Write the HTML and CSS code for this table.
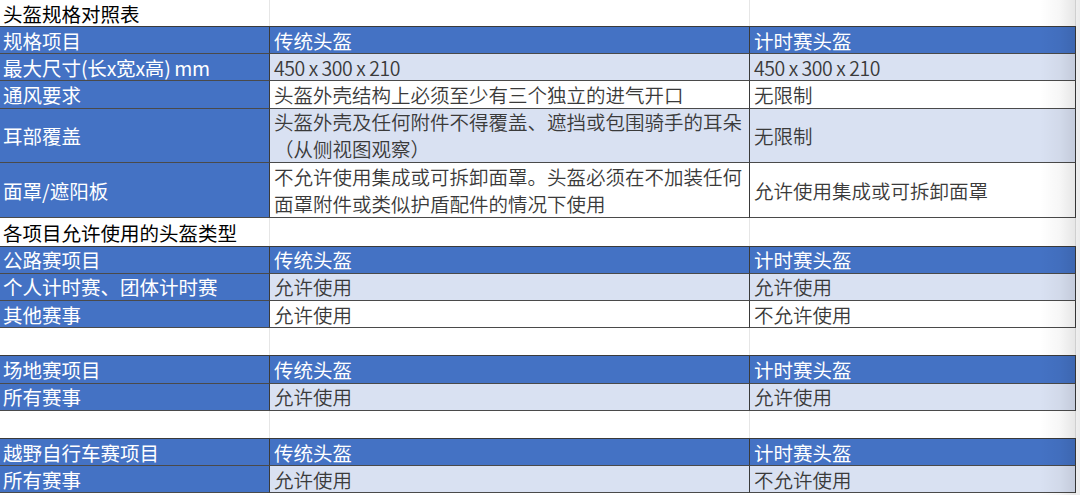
FILE: index.html
```html
<!DOCTYPE html>
<html lang="zh-CN">
<head>
<meta charset="utf-8">
<title>头盔规格对照表</title>
<link rel="stylesheet" href="styles.css">
</head>
<body>
<div class="sheet">
  <div class="row plain title-row">
    <div class="cell title">头盔规格对照表</div><div class="cell"></div><div class="cell"></div>
  </div>

  <div class="block">
    <div class="row">
      <div class="cell hd">规格项目</div><div class="cell hd">传统头盔</div><div class="cell hd">计时赛头盔</div>
    </div>
    <div class="row">
      <div class="cell hd">最大尺寸<span class="lat">(</span>长<span class="lat">x</span>宽<span class="lat">x</span>高<span class="lat">) mm</span></div><div class="cell lt"><span class="lat">450 x 300 x 210</span></div><div class="cell lt"><span class="lat">450 x 300 x 210</span></div>
    </div>
    <div class="row">
      <div class="cell hd">通风要求</div><div class="cell wt">头盔外壳结构上必须至少有三个独立的进气开口</div><div class="cell wt">无限制</div>
    </div>
    <div class="row tall">
      <div class="cell hd">耳部覆盖</div><div class="cell lt">头盔外壳及任何附件不得覆盖、遮挡或包围骑手的耳朵<br>（从侧视图观察）</div><div class="cell lt">无限制</div>
    </div>
    <div class="row taller">
      <div class="cell hd">面罩/遮阳板</div><div class="cell wt">不允许使用集成或可拆卸面罩。头盔必须在不加装任何<br>面罩附件或类似护盾配件的情况下使用</div><div class="cell wt">允许使用集成或可拆卸面罩</div>
    </div>
  </div>

  <div class="row plain">
    <div class="cell title">各项目允许使用的头盔类型</div><div class="cell"></div><div class="cell"></div>
  </div>

  <div class="block">
    <div class="row">
      <div class="cell hd">公路赛项目</div><div class="cell hd">传统头盔</div><div class="cell hd">计时赛头盔</div>
    </div>
    <div class="row">
      <div class="cell hd">个人计时赛、团体计时赛</div><div class="cell lt">允许使用</div><div class="cell lt">允许使用</div>
    </div>
    <div class="row">
      <div class="cell hd">其他赛事</div><div class="cell wt">允许使用</div><div class="cell wt">不允许使用</div>
    </div>
  </div>

  <div class="row plain blank">
    <div class="cell"></div><div class="cell"></div><div class="cell"></div>
  </div>

  <div class="block">
    <div class="row">
      <div class="cell hd">场地赛项目</div><div class="cell hd">传统头盔</div><div class="cell hd">计时赛头盔</div>
    </div>
    <div class="row">
      <div class="cell hd">所有赛事</div><div class="cell lt">允许使用</div><div class="cell lt">允许使用</div>
    </div>
  </div>

  <div class="row plain blank">
    <div class="cell"></div><div class="cell"></div><div class="cell"></div>
  </div>

  <div class="block">
    <div class="row">
      <div class="cell hd">越野自行车赛项目</div><div class="cell hd">传统头盔</div><div class="cell hd">计时赛头盔</div>
    </div>
    <div class="row">
      <div class="cell hd">所有赛事</div><div class="cell lt">允许使用</div><div class="cell lt">不允许使用</div>
    </div>
  </div>

  <div class="edge-shade"></div>
</div>
</body>
</html>
```

FILE: styles.css
```css
html, body {
  margin: 0;
  padding: 0;
  background: #ffffff;
}

body {
  font-family: "Noto Sans CJK SC", "Noto Sans", sans-serif;
  font-size: 19.5px;
  color: #3b3b3b;
  overflow: hidden;
}

.sheet {
  position: relative;
  width: 1080px;
  height: 495px;
}

.block {
  border-top: 1px solid #3a3a3a;
  width: 1076px;
}

.row {
  display: grid;
  grid-template-columns: 270px 480px 326px;
  height: 27.2px;
  box-sizing: border-box;
}

.title-row {
  height: 26px;
}

.row.tall {
  height: 54.4px;
}

.row.taller {
  height: 55.5px;
}

.cell {
  box-sizing: border-box;
  display: flex;
  align-items: center;
  padding: 0 3px 0 4px;
  line-height: 27px;
  white-space: nowrap;
  overflow: hidden;
}

.block .cell {
  border-right: 1px solid #3a3a3a;
  border-bottom: 1px solid #4a4a4a;
}

.block .cell:first-child {
  padding-left: 3px;
}

.plain .cell {
  border-right: 1px solid #e6e6e6;
}

.cell.title {
  color: #000000;
  font-weight: 400;
  padding-left: 3px;
}

.cell.hd {
  background: #4472c4;
  color: #ffffff;
}

.cell.lt {
  background: #d9e1f2;
  color: #3a3a3a;
  font-weight: 350;
}

.cell.wt {
  background: #ffffff;
  color: #3a3a3a;
  font-weight: 350;
}

.lat {
  letter-spacing: -0.45px;
  white-space: pre;
}

.edge-shade {
  position: absolute;
  top: 0;
  right: 0;
  width: 40px;
  height: 495px;
  pointer-events: none;
  background: linear-gradient(to right,
    rgba(0, 0, 0, 0) 0,
    rgba(0, 0, 0, 0.035) 20px,
    rgba(0, 0, 0, 0.1) 36px,
    rgba(0, 0, 0, 0.06) 36px,
    rgba(0, 0, 0, 0.08) 40px);
}
```
